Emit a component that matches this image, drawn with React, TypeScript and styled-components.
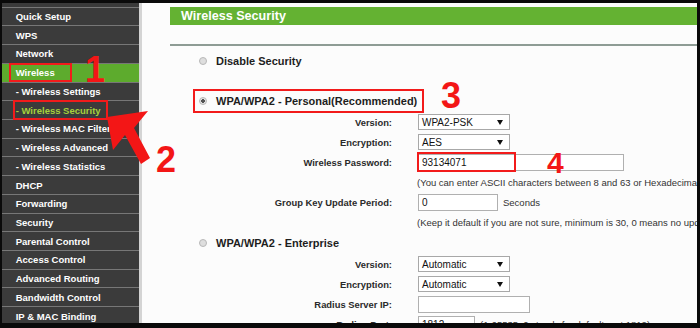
import React from "react";
import styled, { createGlobalStyle } from "styled-components";

const GlobalStyle = createGlobalStyle`
  html, body {
    margin: 0;
    padding: 0;
    background: #0a0a0a;
  }
  body {
    font-family: "Liberation Sans", Arial, sans-serif;
  }
`;

const Page = styled.div`
  position: relative;
  width: 700px;
  height: 328px;
  box-sizing: border-box;
  padding: 3px 3px 5px 2px;
  background: #0a0a0a;
  overflow: hidden;
`;

const Frame = styled.div`
  display: flex;
  width: 100%;
  height: 100%;
  background: #fcfcfc;
  overflow: hidden;
`;

const Sidebar = styled.nav`
  width: 137px;
  flex: none;
  background: #3a3a3a;
  padding-top: 3.7px;
  border-right: 3px solid #d4d4d4;
  box-sizing: content-box;
`;

const MenuItem = styled.div<{ $active?: boolean; $current?: boolean }>`
  display: flex;
  align-items: center;
  box-sizing: border-box;
  height: 18.72px;
  padding-left: 13.7px;
  border-top: 1px solid #777;
  background: ${(p) => (p.$active ? "#5dab2d" : "#3b3b3b")};
  color: ${(p) => (p.$current ? "#a6d13c" : "#fff")};
  font-size: 9.5px;
  font-weight: bold;
  white-space: nowrap;
  overflow: visible;
`;

const MenuMark = styled.span<{ $pl: number; $pr: number; $h: number }>`
  display: inline-flex;
  align-items: center;
  box-sizing: border-box;
  height: ${(p) => p.$h}px;
  margin-left: ${(p) => -(p.$pl + 2)}px;
  padding: 0 ${(p) => p.$pr}px 0 ${(p) => p.$pl}px;
  border: 2px solid #f21b1b;
`;

const Main = styled.main`
  flex: 1;
  min-width: 0;
  padding: 4px 0 0 28px;
  overflow: hidden;
  white-space: nowrap;
  color: #222;
`;

const Header = styled.div`
  height: 18px;
  line-height: 18px;
  padding-left: 11px;
  background: #64b232;
  color: #fff;
  font-size: 12.6px;
  font-weight: bold;
`;

const Rule = styled.div`
  height: 2px;
  margin-top: 19px;
  background: #8e9c95;
`;

const Option = styled.div<{ $boxed?: boolean; $mt: number }>`
  display: flex;
  align-items: center;
  gap: 9px;
  width: fit-content;
  height: 20px;
  margin: ${(p) => p.$mt}px 0 0 25px;
  padding: 0 5px 0 4px;
  outline: ${(p) => (p.$boxed ? "2px solid #f21b1b" : "none")};
  font-size: 11px;
  font-weight: bold;
  color: #1e1e1e;
`;

const Radio = styled.span<{ $checked?: boolean }>`
  width: 8px;
  height: 8px;
  flex: none;
  border-radius: 50%;
  box-sizing: border-box;
  border: 1px solid #b8b8b8;
  background: ${(p) =>
    p.$checked
      ? "radial-gradient(circle, #555 0 1.6px, #e4e4e4 2px)"
      : "#dedede"};
`;

const Fields = styled.div<{ $mt: number }>`
  display: grid;
  grid-template-columns: 222px 1fr;
  grid-auto-rows: 20px;
  column-gap: 26px;
  margin-top: ${(p) => p.$mt}px;
`;

const Label = styled.div`
  grid-column: 1;
  display: flex;
  align-items: center;
  justify-content: flex-end;
  font-size: 9.4px;
  font-weight: bold;
  color: #2a2a2a;
`;

const Cell = styled.div`
  grid-column: 2;
  display: flex;
  align-items: center;
  gap: 5px;
  position: relative;
`;

const Help = styled.div`
  grid-column: 2;
  display: flex;
  align-items: center;
  margin-left: -1px;
  font-size: 9.5px;
  color: #333;
`;

const Select = styled.div`
  display: flex;
  align-items: center;
  justify-content: space-between;
  box-sizing: border-box;
  width: 92px;
  height: 16px;
  padding: 0 6px 0 3px;
  border: 1px solid #a8a8a8;
  background: #fff;
  font-size: 10px;
  color: #111;
`;

const Caret = styled.span`
  width: 0;
  height: 0;
  border-left: 3px solid transparent;
  border-right: 3px solid transparent;
  border-top: 5px solid #111;
`;

const Input = styled.div<{ $w: number }>`
  display: flex;
  align-items: center;
  box-sizing: border-box;
  width: ${(p) => p.$w}px;
  height: 17px;
  padding-left: 3px;
  border: 1px solid #b0b0b0;
  background: #fff;
  font-size: 10px;
  color: #111;
`;

const Note = styled.span`
  font-size: 9.5px;
  color: #333;
`;

const InputMark = styled.span`
  position: absolute;
  left: -1px;
  top: 0;
  width: 99px;
  height: 20px;
  box-sizing: border-box;
  border: 2px solid #f21b1b;
`;

const Step = styled.span<{ $x: number; $y: number; $size: number }>`
  position: absolute;
  left: ${(p) => p.$x}px;
  top: ${(p) => p.$y}px;
  font-size: ${(p) => p.$size}px;
  line-height: 1;
  font-weight: bold;
  color: #f31616;
  pointer-events: none;
`;

const ArrowLayer = styled.svg`
  position: absolute;
  left: 0;
  top: 0;
  pointer-events: none;
`;

const menu = [
  { label: "Quick Setup" },
  { label: "WPS" },
  { label: "Network" },
  { label: "Wireless", active: true, mark: { pl: 5, pr: 15, h: 19 } },
  { label: "- Wireless Settings" },
  { label: "- Wireless Security", current: true, mark: { pl: 1, pr: 5, h: 20 } },
  { label: "- Wireless MAC Filter" },
  { label: "- Wireless Advanced" },
  { label: "- Wireless Statistics" },
  { label: "DHCP" },
  { label: "Forwarding" },
  { label: "Security" },
  { label: "Parental Control" },
  { label: "Access Control" },
  { label: "Advanced Routing" },
  { label: "Bandwidth Control" },
  { label: "IP & MAC Binding" },
];

const Dropdown = ({ value }: { value: string }) => (
  <Select>
    {value}
    <Caret />
  </Select>
);

const App = () => {
  return (
    <>
      <GlobalStyle />
      <Page>
        <Frame>
          <Sidebar>
            {menu.map((m) => (
              <MenuItem key={m.label} $active={m.active} $current={m.current}>
                {m.mark ? (
                  <MenuMark $pl={m.mark.pl} $pr={m.mark.pr} $h={m.mark.h}>
                    {m.label}
                  </MenuMark>
                ) : (
                  m.label
                )}
              </MenuItem>
            ))}
          </Sidebar>
          <Main>
            <Header>Wireless Security</Header>
            <Rule />
            <Option $mt={5}>
              <Radio />
              Disable Security
            </Option>
            <Option $mt={20} $boxed>
              <Radio $checked />
              WPA/WPA2 - Personal(Recommended)
            </Option>
            <Fields $mt={1}>
              <Label>Version:</Label>
              <Cell>
                <Dropdown value="WPA2-PSK" />
              </Cell>
              <Label>Encryption:</Label>
              <Cell>
                <Dropdown value="AES" />
              </Cell>
              <Label>Wireless Password:</Label>
              <Cell>
                <Input $w={206}>93134071</Input>
                <InputMark />
              </Cell>
              <Help>
                (You can enter ASCII characters between 8 and 63 or Hexadecimal characters between 8 and 64.)
              </Help>
              <Label>Group Key Update Period:</Label>
              <Cell>
                <Input $w={80}>0</Input>
                <Note>Seconds</Note>
              </Cell>
              <Help>
                (Keep it default if you are not sure, minimum is 30, 0 means no update)
              </Help>
            </Fields>
            <Option $mt={1}>
              <Radio />
              WPA/WPA2 - Enterprise
            </Option>
            <Fields $mt={1}>
              <Label>Version:</Label>
              <Cell>
                <Dropdown value="Automatic" />
              </Cell>
              <Label>Encryption:</Label>
              <Cell>
                <Dropdown value="Automatic" />
              </Cell>
              <Label>Radius Server IP:</Label>
              <Cell>
                <Input $w={112} />
              </Cell>
              <Label>Radius Port:</Label>
              <Cell>
                <Input $w={57}>1812</Input>
                <Note>(1-65535, 0 stands for default port 1812)</Note>
              </Cell>
            </Fields>
          </Main>
        </Frame>
        <ArrowLayer width={700} height={328} viewBox="0 0 700 328">
          <polygon
            points="107,117 148,111 134,128 150,158 141,164 125,135 113,150"
            fill="#f31616"
          />
        </ArrowLayer>
        <Step $x={85} $y={52} $size={36}>1</Step>
        <Step $x={156} $y={142} $size={36}>2</Step>
        <Step $x={441} $y={78} $size={36}>3</Step>
        <Step $x={547} $y={148} $size={30}>4</Step>
      </Page>
    </>
  );
};

export default App;
